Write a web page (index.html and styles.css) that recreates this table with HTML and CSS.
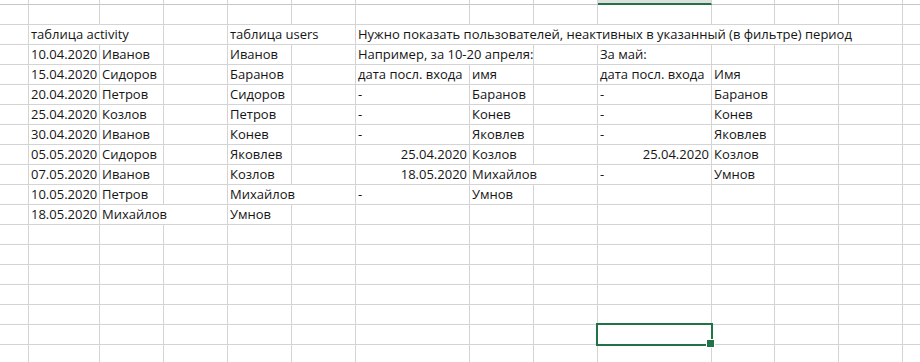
FILE: index.html
```html
<!DOCTYPE html>
<html lang="ru">
<head>
    <meta charset="UTF-8">
    <title>Книга1</title>
    <link rel="stylesheet" href="styles.css">
</head>
<body>
    <div class="sheet">
        <!-- column headers (only their lower edge is on screen) -->
        <div class="hd"></div><div class="hd"></div><div class="hd"></div><div class="hd"></div><div class="hd"></div><div class="hd"></div><div class="hd"></div><div class="hd"></div><div class="hd"></div><div class="hd active"></div><div class="hd"></div><div class="hd"></div><div class="hd"></div><div class="hd"></div>

        <div class="c"></div><div class="c"></div><div class="c"></div><div class="c"></div><div class="c"></div><div class="c"></div><div class="c"></div><div class="c"></div><div class="c"></div><div class="c"></div><div class="c"></div><div class="c"></div><div class="c"></div><div class="c"></div>

        <div class="c"></div>
        <div class="c w2">таблица activity</div>
        <div class="c"></div>
        <div class="c w2">таблица users</div>
        <div class="c w7">Нужно показать пользователей, неактивных в указанный (в фильтре) период</div>
        <div class="c"></div>

        <div class="c"></div>
        <div class="c num">10.04.2020</div>
        <div class="c">Иванов</div>
        <div class="c"></div>
        <div class="c">Иванов</div>
        <div class="c"></div>
        <div class="c w2">Например, за 10-20 апреля:</div>
        <div class="c"></div>
        <div class="c">За май:</div>
        <div class="c"></div><div class="c"></div><div class="c"></div><div class="c"></div>

        <div class="c"></div>
        <div class="c num">15.04.2020</div>
        <div class="c">Сидоров</div>
        <div class="c"></div>
        <div class="c">Баранов</div>
        <div class="c"></div>
        <div class="c">дата посл. входа</div>
        <div class="c">имя</div>
        <div class="c"></div>
        <div class="c">дата посл. входа</div>
        <div class="c">Имя</div>
        <div class="c"></div><div class="c"></div><div class="c"></div>

        <div class="c"></div>
        <div class="c num">20.04.2020</div>
        <div class="c">Петров</div>
        <div class="c"></div>
        <div class="c">Сидоров</div>
        <div class="c"></div>
        <div class="c">-</div>
        <div class="c">Баранов</div>
        <div class="c"></div>
        <div class="c">-</div>
        <div class="c">Баранов</div>
        <div class="c"></div><div class="c"></div><div class="c"></div>

        <div class="c"></div>
        <div class="c num">25.04.2020</div>
        <div class="c">Козлов</div>
        <div class="c"></div>
        <div class="c">Петров</div>
        <div class="c"></div>
        <div class="c">-</div>
        <div class="c">Конев</div>
        <div class="c"></div>
        <div class="c">-</div>
        <div class="c">Конев</div>
        <div class="c"></div><div class="c"></div><div class="c"></div>

        <div class="c"></div>
        <div class="c num">30.04.2020</div>
        <div class="c">Иванов</div>
        <div class="c"></div>
        <div class="c">Конев</div>
        <div class="c"></div>
        <div class="c">-</div>
        <div class="c">Яковлев</div>
        <div class="c"></div>
        <div class="c">-</div>
        <div class="c">Яковлев</div>
        <div class="c"></div><div class="c"></div><div class="c"></div>

        <div class="c"></div>
        <div class="c num">05.05.2020</div>
        <div class="c">Сидоров</div>
        <div class="c"></div>
        <div class="c">Яковлев</div>
        <div class="c"></div>
        <div class="c num">25.04.2020</div>
        <div class="c">Козлов</div>
        <div class="c"></div>
        <div class="c num">25.04.2020</div>
        <div class="c">Козлов</div>
        <div class="c"></div><div class="c"></div><div class="c"></div>

        <div class="c"></div>
        <div class="c num">07.05.2020</div>
        <div class="c">Иванов</div>
        <div class="c"></div>
        <div class="c">Козлов</div>
        <div class="c"></div>
        <div class="c num">18.05.2020</div>
        <div class="c w2">Михайлов</div>
        <div class="c">-</div>
        <div class="c">Умнов</div>
        <div class="c"></div><div class="c"></div><div class="c"></div>

        <div class="c"></div>
        <div class="c num">10.05.2020</div>
        <div class="c">Петров</div>
        <div class="c"></div>
        <div class="c w2">Михайлов</div>
        <div class="c">-</div>
        <div class="c">Умнов</div>
        <div class="c"></div><div class="c"></div><div class="c"></div><div class="c"></div><div class="c"></div><div class="c"></div>

        <div class="c"></div>
        <div class="c num">18.05.2020</div>
        <div class="c w2">Михайлов</div>
        <div class="c">Умнов</div>
        <div class="c"></div><div class="c"></div><div class="c"></div><div class="c"></div><div class="c"></div><div class="c"></div><div class="c"></div><div class="c"></div><div class="c"></div>

        <div class="c"></div><div class="c"></div><div class="c"></div><div class="c"></div><div class="c"></div><div class="c"></div><div class="c"></div><div class="c"></div><div class="c"></div><div class="c"></div><div class="c"></div><div class="c"></div><div class="c"></div><div class="c"></div>
        <div class="c"></div><div class="c"></div><div class="c"></div><div class="c"></div><div class="c"></div><div class="c"></div><div class="c"></div><div class="c"></div><div class="c"></div><div class="c"></div><div class="c"></div><div class="c"></div><div class="c"></div><div class="c"></div>
        <div class="c"></div><div class="c"></div><div class="c"></div><div class="c"></div><div class="c"></div><div class="c"></div><div class="c"></div><div class="c"></div><div class="c"></div><div class="c"></div><div class="c"></div><div class="c"></div><div class="c"></div><div class="c"></div>
        <div class="c"></div><div class="c"></div><div class="c"></div><div class="c"></div><div class="c"></div><div class="c"></div><div class="c"></div><div class="c"></div><div class="c"></div><div class="c"></div><div class="c"></div><div class="c"></div><div class="c"></div><div class="c"></div>
        <div class="c"></div><div class="c"></div><div class="c"></div><div class="c"></div><div class="c"></div><div class="c"></div><div class="c"></div><div class="c"></div><div class="c"></div><div class="c"></div><div class="c"></div><div class="c"></div><div class="c"></div><div class="c"></div>
        <div class="c"></div><div class="c"></div><div class="c"></div><div class="c"></div><div class="c"></div><div class="c"></div><div class="c"></div><div class="c"></div><div class="c"></div><div class="c selected"></div><div class="c"></div><div class="c"></div><div class="c"></div><div class="c"></div>
        <div class="c"></div><div class="c"></div><div class="c"></div><div class="c"></div><div class="c"></div><div class="c"></div><div class="c"></div><div class="c"></div><div class="c"></div><div class="c"></div><div class="c"></div><div class="c"></div><div class="c"></div><div class="c"></div>
    </div>
</body>
</html>
```

FILE: styles.css
```css
* {
    margin: 0;
    padding: 0;
    box-sizing: border-box;
}

body {
    font-family: "Open Sans", "Liberation Sans", sans-serif;
    font-size: 13px;
    color: #151515;
    background: #ffffff;
    width: 920px;
    height: 362px;
    overflow: hidden;
}

.sheet {
    display: grid;
    grid-template-columns: 29px 71px 64px 64px 64px 64px 114px 64px 64px 114px 63px 64px 64px 40px;
    grid-template-rows: 5px;
    grid-auto-rows: 20px;
}

/* column header strip */
.hd {
    border-right: 1px solid #d4d4d4;
    border-bottom: 1px solid #c6c6c6;
}

.hd.active {
    background: #dcdfdd;
    border-bottom: 2px solid #217346;
}

/* cells */
.c {
    border-right: 1px solid #d4d4d4;
    border-bottom: 1px solid #d4d4d4;
    padding: 0 2px;
    line-height: 18px;
    white-space: nowrap;
    overflow: hidden;
}

.num {
    text-align: right;
}

.w2 { grid-column: span 2; }
.w7 { grid-column: span 7; }

/* active cell frame with fill handle */
.c.selected {
    position: relative;
    overflow: visible;
}

.c.selected::after {
    content: '';
    position: absolute;
    left: -2px;
    top: -2px;
    right: -2px;
    bottom: -2px;
    border: 2px solid #217346;
}

.c.selected::before {
    content: '';
    position: absolute;
    right: -4px;
    bottom: -4px;
    width: 7px;
    height: 7px;
    background: #217346;
    border: 1px solid #ffffff;
    z-index: 1;
}
```
